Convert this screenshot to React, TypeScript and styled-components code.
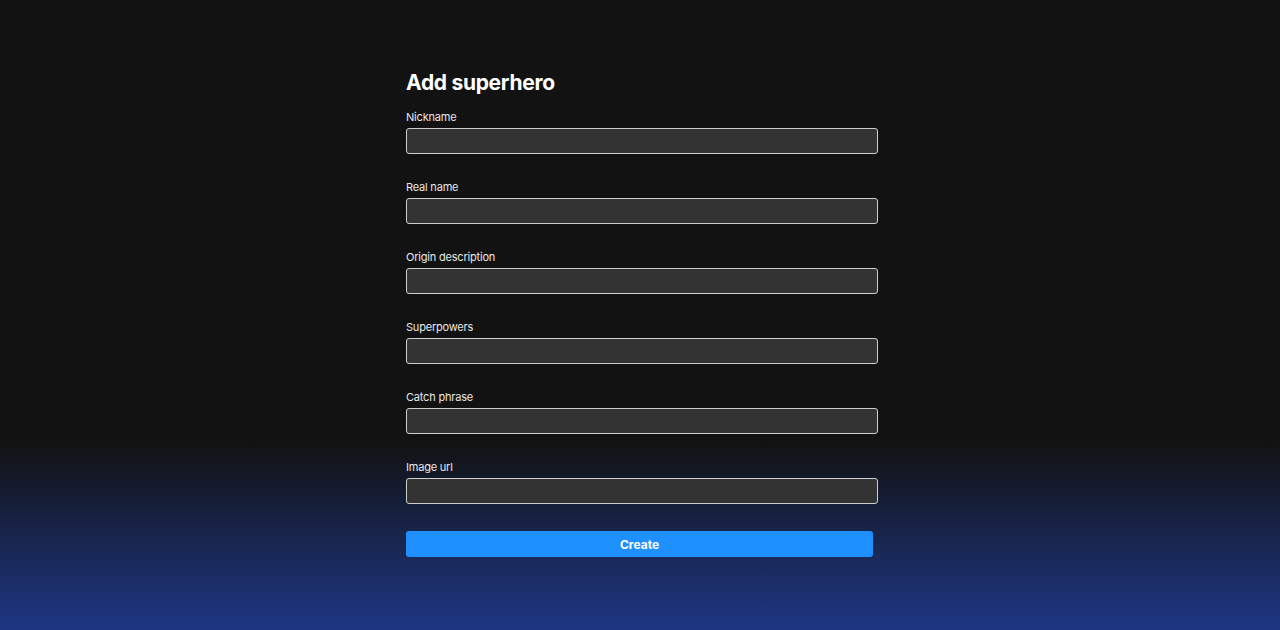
import React from "react";
import styled, { createGlobalStyle } from "styled-components";

const Global = createGlobalStyle`
  html, body { margin: 0; padding: 0; }
  body { background: #121212; font-family: Inter, "Noto Sans", sans-serif; }
`;

const Page = styled.div`
  min-height: 630px;
  background: linear-gradient(to bottom, #121212 0%, #121212 70%, #1e3785 100%);
  display: flex;
  justify-content: center;
  padding: 69px 1px 0 0;
  box-sizing: border-box;
`;

const Form = styled.form`
  width: 467px;
  display: flex;
  flex-direction: column;
`;

const Title = styled.h1`
  margin: 0 0 13px;
  font-size: 21px;
  line-height: 28px;
  font-weight: 700;
  color: #ffffff;
  letter-spacing: -0.3px;
`;

const Field = styled.div`
  display: flex;
  flex-direction: column;
  gap: 5px;
  margin-bottom: 26px;
`;

const Label = styled.label`
  padding-top: 1px;
  font-size: 11px;
  line-height: 12px;
  color: #e8e8e8;
  letter-spacing: -0.2px;
`;

const Input = styled.input`
  width: 472px;
  height: 26px;
  box-sizing: border-box;
  background: #333333;
  border: 1px solid #cfcfcf;
  border-radius: 3px;
  color: #fff;
  padding: 0 6px;
  outline: none;
`;

const Button = styled.button`
  height: 26px;
  width: 467px;
  margin-top: 1px;
  background: #1e90ff;
  border: none;
  border-radius: 3px;
  color: #fff;
  font-family: Inter, "Noto Sans", sans-serif;
  font-size: 12px;
  font-weight: 700;
  cursor: pointer;
`;

const fields = [
  "Nickname",
  "Real name",
  "Origin description",
  "Superpowers",
  "Catch phrase",
  "Image url",
];

export default function App() {
  return (
    <>
      <Global />
      <Page>
        <Form onSubmit={(e) => e.preventDefault()}>
          <Title>Add superhero</Title>
          {fields.map((f) => (
            <Field key={f}>
              <Label>{f}</Label>
              <Input type="text" />
            </Field>
          ))}
          <Button type="submit">Create</Button>
        </Form>
      </Page>
    </>
  );
}
